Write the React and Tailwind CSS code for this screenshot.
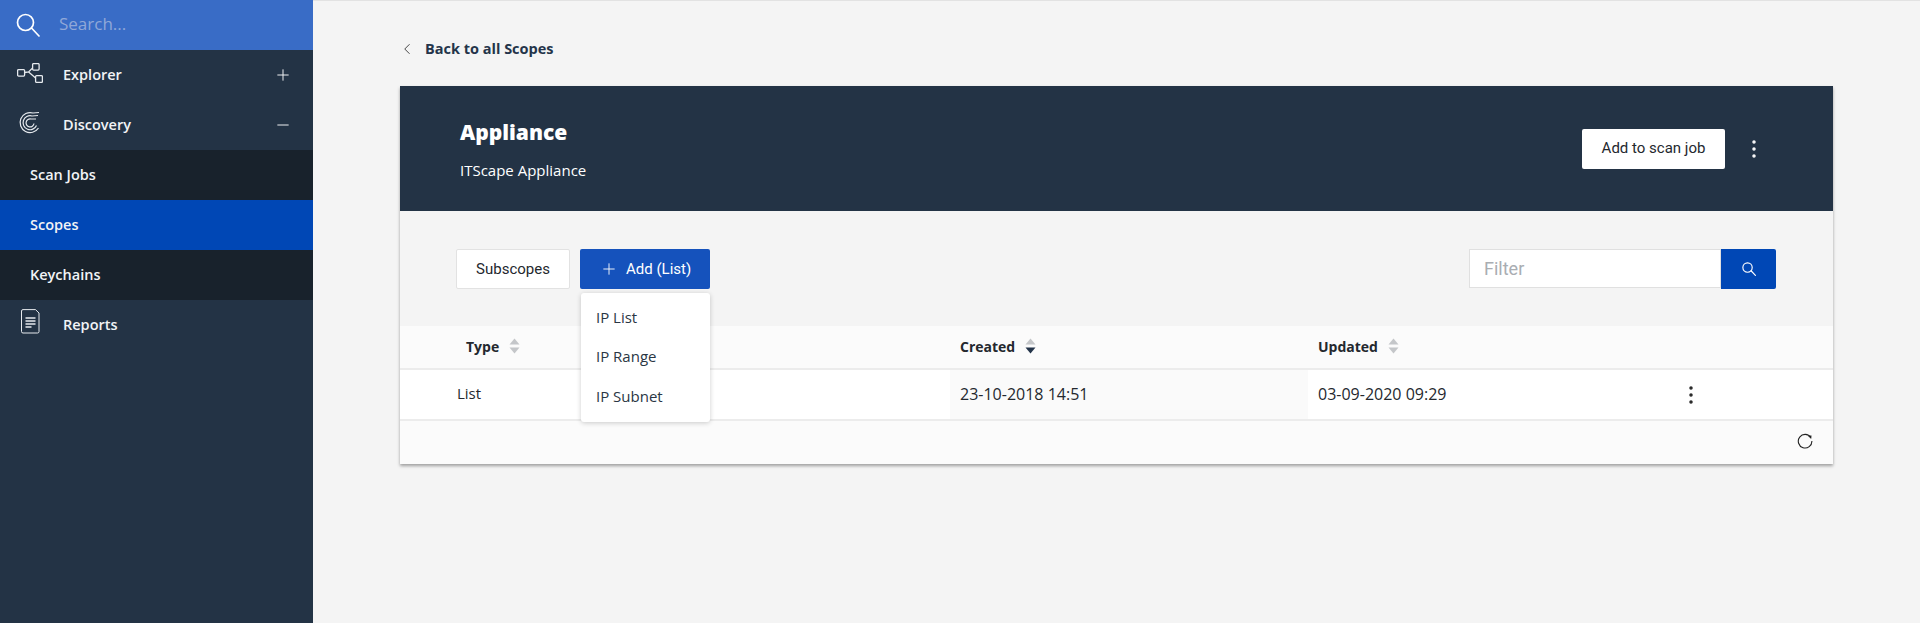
import React from "react";
import { Plus, Minus, ChevronLeft, EllipsisVertical } from "lucide-react";

const font = "font-['Open_Sans','Noto_Sans',sans-serif]";
const btnFont = "font-['Roboto','Liberation_Sans',sans-serif]";

function SearchGlyph({ size, sw }) {
  return (
    <svg width={size} height={size} viewBox="0 0 24 24" fill="none" stroke="currentColor" strokeWidth={sw} strokeLinecap="round">
      <circle cx="9.500" cy="9.500" r="8" />
      <path d="M15.500 15L23 23" />
    </svg>
  );
}

function RefreshGlyph() {
  return (
    <svg width="16" height="16" viewBox="0 0 16 16" fill="none" stroke="#222" strokeWidth="1.100">
      <path d="M13.800 4.500A6.800 6.800 0 1 0 14.900 8" />
      <path d="M10.800 2.800L14.500 2.500L14.200 6Z" fill="#222" stroke="none" />
    </svg>
  );
}

function ExplorerIcon() {
  return (
    <svg width="26" height="20" viewBox="0 0 26 20" fill="none" stroke="#e6eaee" strokeWidth="1.300">
      <rect x="0.600" y="6.600" width="7" height="6.500" rx="1" />
      <rect x="15.600" y="0.600" width="6.500" height="6.500" rx="1" />
      <rect x="18.600" y="12.600" width="6.800" height="6.800" rx="1" />
      <path d="M7.600 9.500l4-.5 4-4M11.600 9l7 6" />
    </svg>
  );
}

function DiscoveryIcon() {
  return (
    <svg width="24" height="24" viewBox="0 0 24 24" fill="none" stroke="#e6eaee" strokeWidth="1.200">
      <path d="M21 2.500L15 3A10 10 0 1 0 20.500 18" />
      <path d="M20 5.500L14 6A7 7 0 1 0 18.500 15.500" />
      <path d="M18 9L13 9A4 4 0 1 0 16 13.500" />
    </svg>
  );
}

function ReportIcon() {
  return (
    <svg width="19" height="25" viewBox="0 0 19 25" fill="none" stroke="#e6eaee" strokeWidth="1">
      <path d="M2 0.600h12.500L18 4v18.500a1.500 1.500 0 0 1-1.500 1.500H2a1.500 1.500 0 0 1-1.500-1.500V2A1.500 1.500 0 0 1 2 0.600z" />
      <path d="M4.500 9h10M4.500 12h10M4.500 15h10M4.500 18h6" strokeWidth="1.300" />
    </svg>
  );
}

function SortIcon({ active }) {
  return (
    <svg width="11" height="16" viewBox="0 0 11 16" className="ml-[10px] shrink-0">
      <path d="M5.500 0.500L10.500 6.500H0.500Z" fill="#c4c6c9" />
      <path d="M5.500 15.500L10.500 9.500H0.500Z" fill={active ? "#24344a" : "#c4c6c9"} />
    </svg>
  );
}

function NavItem({ icon, label, action, iconClass }) {
  return (
    <div className="flex h-[50px] items-center bg-[#233345] text-[#f2f4f6]">
      <div className={`flex w-[63px] shrink-0 justify-start ${iconClass}`}>{icon}</div>
      <span className="flex-1 pb-[1px] text-[14.5px] font-semibold">{label}</span>
      {action && <span className="mr-[21px] text-[#f2f4f6]">{action}</span>}
    </div>
  );
}

function SubItem({ label, active }) {
  return (
    <div className={`flex h-[50px] items-center pb-[1px] pl-[30px] text-[14.5px] font-semibold text-[#f2f4f6] ${active ? "bg-[#0047b5]" : "bg-[#18222c]"}`}>
      {label}
    </div>
  );
}

export default function App() {
  return (
    <div className={`${font} flex h-[623px] w-[1920px] overflow-hidden bg-[#f4f4f4]`}>
      <aside className="w-[313px] shrink-0 bg-[#233345]">
        <div className="flex h-[50px] items-center bg-[#396cc6] pl-[16px] text-white">
          <SearchGlyph size={24} sw={1.7} />
          <span className="ml-[19px] pb-[2px] text-[17px] text-[#90a8d8]">Search...</span>
        </div>
        <NavItem iconClass="pl-[17px] pb-[5px]" icon={<ExplorerIcon />} label="Explorer" action={<Plus size={18} strokeWidth={1.3} />} />
        <NavItem iconClass="pl-[18px] pb-[6px]" icon={<DiscoveryIcon />} label="Discovery" action={<Minus size={18} strokeWidth={1.3} />} />
        <SubItem label="Scan Jobs" />
        <SubItem label="Scopes" active />
        <SubItem label="Keychains" />
        <NavItem iconClass="pl-[21px] pb-[8px]" icon={<ReportIcon />} label="Reports" />
      </aside>

      <main className="flex-1 border-t border-[#e2e2e2] pl-[87px] pr-[87px]">
        <div className="flex h-[85px] items-center pt-[11px] text-[14.5px] font-bold text-[#24344a]">
          <ChevronLeft size={18} strokeWidth={1.2} className="-ml-[2px] text-[#333]" />
          <span className="ml-[9px]">Back to all Scopes</span>
        </div>

        <section className="w-[1433px] bg-[#f4f4f4] shadow-[0_2px_3px_rgba(0,0,0,0.35)]">
          <div className="flex h-[125px] items-center justify-between bg-[#233345] pl-[60px] pr-[70px] text-white">
            <div>
              <h1 className="text-[21px] font-extrabold leading-[30px]">Appliance</h1>
              <p className="mt-[13px] text-[15px] leading-[20px]">ITScape Appliance</p>
            </div>
            <div className="flex items-center">
              <button className={`${btnFont} h-[40px] w-[143px] rounded-[2px] bg-white text-[15px] text-[#24282e]`}>Add to scan job</button>
              <EllipsisVertical size={24} strokeWidth={1.5} className="ml-[17px] -mr-[3px] text-white" />
            </div>
          </div>

          <div className="relative flex h-[115px] items-start justify-between pl-[56px] pr-[57px] pt-[38px]">
            <div className="flex gap-[10px]">
              <button className={`${btnFont} h-[40px] w-[114px] rounded-[2px] border border-[#e2e2e2] bg-white text-[15px] text-[#24282e]`}>Subscopes</button>
              <button className={`${btnFont} flex h-[40px] w-[130px] items-center rounded-[2px] bg-[#1552bc] pl-[20px] text-[15px] text-white`}>
                <Plus size={18} strokeWidth={1.2} />
                <span className="ml-[8px]">Add (List)</span>
              </button>
            </div>
            <div className="flex">
              <div className={`${btnFont} flex h-[39px] w-[252px] items-center border border-[#e0e0e0] bg-white pb-[1px] pl-[14px] text-[18px] text-[#a9adb2]`}>Filter</div>
              <button className="flex h-[40px] w-[55px] items-center justify-center rounded-r-[2px] bg-[#0047b5] text-white">
                <SearchGlyph size={14} sw={2} />
              </button>
            </div>
            <div className={`${font} absolute left-[181px] top-[82px] z-10 w-[129px] rounded-[3px] bg-white py-[5px] text-[15px] text-[#2a3644] shadow-[0_1px_5px_rgba(0,0,0,0.2)]`}>
              <div className="flex h-[40px] items-center pb-[2px] pl-[15px]">IP List</div>
              <div className="flex h-[39px] items-center pb-[2px] pl-[15px]">IP Range</div>
              <div className="flex h-[40px] items-center pb-[2px] pl-[15px]">IP Subnet</div>
            </div>
          </div>

          <div className="grid h-[44px] grid-cols-[550px_358px_1fr] items-center border-b-2 border-[#ececec] bg-[#fbfbfb] pb-[2px] text-[14px] font-bold text-[#24282e]">
            <div className="flex items-center pl-[66px]">Type<SortIcon /></div>
            <div className="flex items-center pl-[10px]">Created<SortIcon active /></div>
            <div className="flex items-center pl-[10px]">Updated<SortIcon /></div>
          </div>
          <div className="grid h-[51px] grid-cols-[550px_358px_1fr_144px] items-center border-b-2 border-[#ececec] bg-white text-[15px] text-[#24282e]">
            <div className="pb-[2px] pl-[57px]">List</div>
            <div className="flex h-full items-center bg-[#fafafa] pb-[1px] pl-[10px] text-[16px]">23-10-2018 14:51</div>
            <div className="pb-[1px] pl-[10px] text-[16px]">03-09-2020 09:29</div>
            <div className="flex"><EllipsisVertical size={24} strokeWidth={1.5} className="-ml-[10px] text-[#222]" /></div>
          </div>
          <div className="flex h-[43px] items-center justify-end bg-[#fbfbfb] pb-[4px] pr-[20px]">
            <RefreshGlyph />
          </div>
        </section>
      </main>
    </div>
  );
}
